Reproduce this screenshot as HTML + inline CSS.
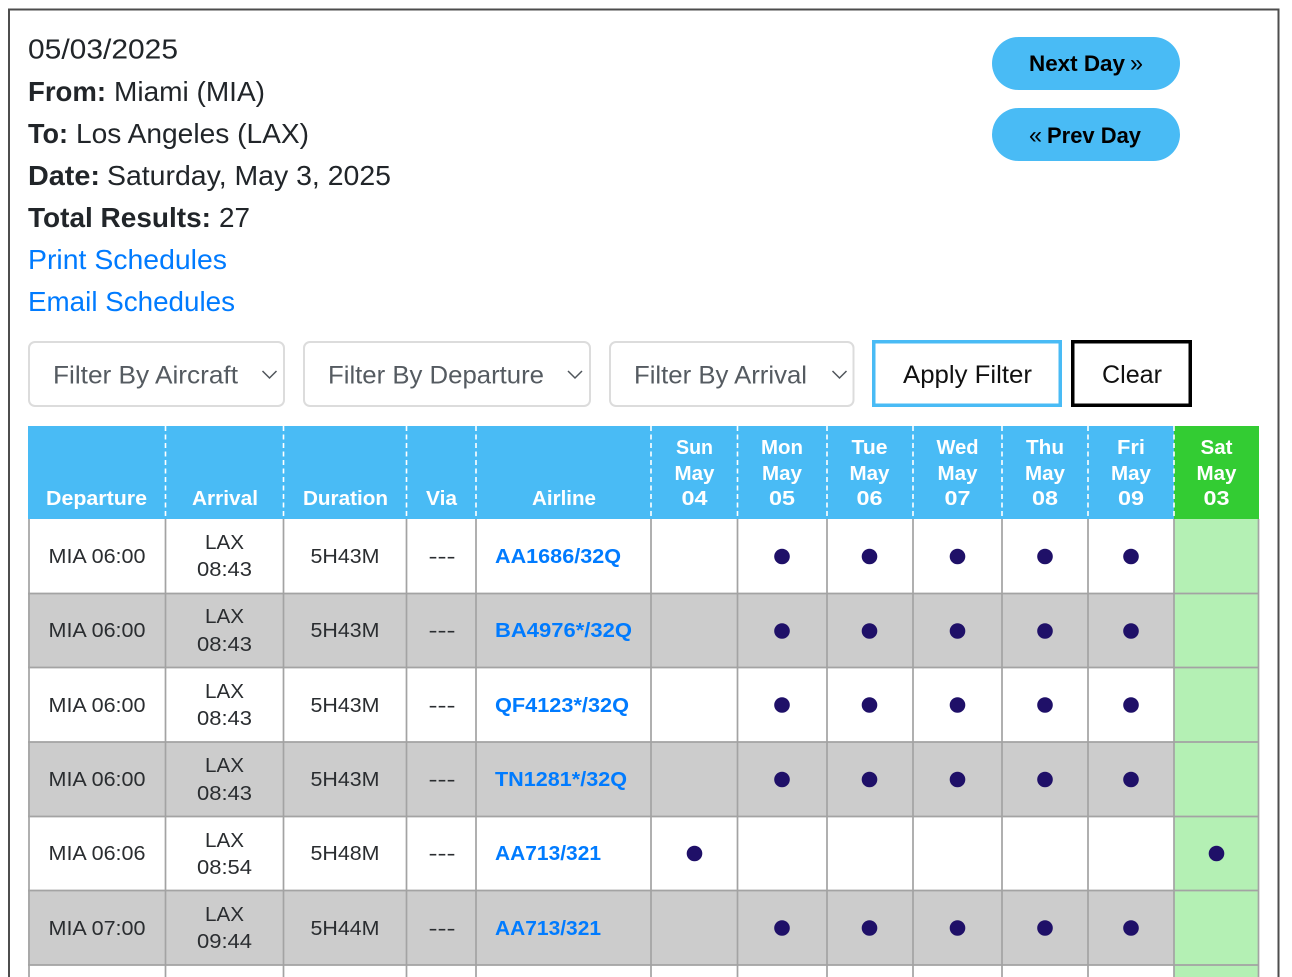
<!DOCTYPE html>
<html lang="en"><head><meta charset="utf-8"><title>Flight Schedules</title>
<style>
html,body{margin:0;padding:0;background:#fff;width:1292px;height:977px;overflow:hidden}
svg{display:block;font-family:"Liberation Sans",sans-serif;filter:blur(.3px)}
.b{font-weight:700}
.info{font-size:28px;fill:#212529}
.lnk{font-size:28px;fill:#007bff}
.sel{font-size:25px;fill:#555b61}
.hd{font-size:20.500px;font-weight:700;fill:#fff;text-anchor:middle}
.td{font-size:20px;fill:#2a2d30;text-anchor:middle}
.al{font-size:20px;font-weight:700;fill:#007bff}
</style></head><body>
<svg width="1292" height="977" viewBox="0 0 1292 977" xmlns="http://www.w3.org/2000/svg">
<rect width="1292" height="977" fill="#fff"/>
<path d="M9 977V9.500H1278.500V977" fill="none" stroke="#4d4d4d" stroke-width="2"/>

<text class="info" x="28" y="58.500" textLength="150" lengthAdjust="spacingAndGlyphs">05/03/2025</text>
<text class="info b" x="28" y="101" textLength="78" lengthAdjust="spacingAndGlyphs">From:</text><text class="info" x="114" y="101" textLength="151" lengthAdjust="spacingAndGlyphs">Miami (MIA)</text>
<text class="info b" x="28" y="143" textLength="40" lengthAdjust="spacingAndGlyphs">To:</text><text class="info" x="76" y="143" textLength="233" lengthAdjust="spacingAndGlyphs">Los Angeles (LAX)</text>
<text class="info b" x="28" y="185" textLength="72" lengthAdjust="spacingAndGlyphs">Date:</text><text class="info" x="107" y="185" textLength="284" lengthAdjust="spacingAndGlyphs">Saturday, May 3, 2025</text>
<text class="info b" x="28" y="227" textLength="183" lengthAdjust="spacingAndGlyphs">Total Results:</text><text class="info" x="219" y="227" textLength="31" lengthAdjust="spacingAndGlyphs">27</text>
<text class="lnk" x="28" y="269" textLength="199" lengthAdjust="spacingAndGlyphs">Print Schedules</text>
<text class="lnk" x="28" y="311" textLength="207" lengthAdjust="spacingAndGlyphs">Email Schedules</text>

<rect x="992" y="37" width="188" height="53" rx="26.500" fill="#49bbf5"/>
<rect x="992" y="108" width="188" height="53" rx="26.500" fill="#49bbf5"/>
<text class="b" x="1029" y="71" font-size="22.500" textLength="96" lengthAdjust="spacingAndGlyphs" fill="#000">Next Day</text>
<text x="1130" y="71" font-size="24" textLength="13" lengthAdjust="spacingAndGlyphs" fill="#000">»</text>
<text x="1029" y="143" font-size="24" textLength="13" lengthAdjust="spacingAndGlyphs" fill="#000">«</text>
<text class="b" x="1047" y="143" font-size="22.500" textLength="94" lengthAdjust="spacingAndGlyphs" fill="#000">Prev Day</text>

<g fill="#fff" stroke="#dcdcdc" stroke-width="2">
<rect x="29" y="342" width="255" height="64" rx="6"/>
<rect x="304" y="342" width="286" height="64" rx="6"/>
<rect x="610" y="342" width="243.500" height="64" rx="6"/>
</g>
<text class="sel" x="53" y="383.500" textLength="185" lengthAdjust="spacingAndGlyphs">Filter By Aircraft</text>
<text class="sel" x="328" y="383.500" textLength="216" lengthAdjust="spacingAndGlyphs">Filter By Departure</text>
<text class="sel" x="634" y="383.500" textLength="173" lengthAdjust="spacingAndGlyphs">Filter By Arrival</text>
<g fill="none" stroke="#4f555b" stroke-width="1.500">
<path d="M262.500 371l7 7l7-7"/>
<path d="M568 371l7 7l7-7"/>
<path d="M832.500 371l7 7l7-7"/>
</g>
<rect x="873.750" y="341.750" width="186.500" height="63.500" fill="#fff" stroke="#49bbf5" stroke-width="3.500"/>
<rect x="1072.750" y="341.750" width="117.500" height="63.500" fill="#fff" stroke="#000" stroke-width="3.500"/>
<text x="903" y="383" font-size="25" textLength="129" lengthAdjust="spacingAndGlyphs" fill="#111">Apply Filter</text>
<text x="1102" y="383" font-size="25" textLength="60" lengthAdjust="spacingAndGlyphs" fill="#111">Clear</text>

<!-- table backgrounds -->
<rect x="28" y="426" width="1146" height="93" fill="#49bbf5"/>
<rect x="1174" y="426" width="85" height="93" fill="#33cc33"/>
<rect x="28" y="519" width="1146" height="458" fill="#fff"/>
<rect x="28" y="593.500" width="1146" height="74" fill="#cccccc"/>
<rect x="28" y="742" width="1146" height="74.500" fill="#cccccc"/>
<rect x="28" y="890.500" width="1146" height="74.500" fill="#cccccc"/>
<rect x="1174" y="519" width="85" height="458" fill="#b4f0b4"/>

<!-- header dashed separators -->
<g stroke="#fff" stroke-width="1.600" stroke-dasharray="5 3.500">
<path d="M165.500 426V519M283.500 426V519M406.500 426V519M476 426V519M651 426V519M737.500 426V519M827 426V519M913 426V519M1002 426V519M1088 426V519M1174 426V519"/>
</g>
<!-- grid -->
<g stroke="#a3a3a3" stroke-width="1.700" fill="none">
<path d="M29 519V977M165.500 519V977M283.500 519V977M406.500 519V977M476 519V977M651 519V977M737.500 519V977M827 519V977M913 519V977M1002 519V977M1088 519V977M1174 519V977M1258.500 519V977"/>
<path d="M28 593.500H1259M28 667.500H1259M28 742H1259M28 816.500H1259M28 890.500H1259M28 965H1259"/>
</g>

<!-- header text -->
<text class="hd" x="96.500" y="505" textLength="101" lengthAdjust="spacingAndGlyphs">Departure</text>
<text class="hd" x="225" y="505" textLength="66" lengthAdjust="spacingAndGlyphs">Arrival</text>
<text class="hd" x="345.500" y="505" textLength="85" lengthAdjust="spacingAndGlyphs">Duration</text>
<text class="hd" x="441.500" y="505" textLength="31" lengthAdjust="spacingAndGlyphs">Via</text>
<text class="hd" x="564" y="505" textLength="64" lengthAdjust="spacingAndGlyphs">Airline</text>

<text class="hd" x="694.500" y="454" textLength="37" lengthAdjust="spacingAndGlyphs">Sun</text><text class="hd" x="694.500" y="480" textLength="40" lengthAdjust="spacingAndGlyphs">May</text><text class="hd" x="694.500" y="505" textLength="26" lengthAdjust="spacingAndGlyphs">04</text>
<text class="hd" x="782" y="454" textLength="42" lengthAdjust="spacingAndGlyphs">Mon</text><text class="hd" x="782" y="480" textLength="40" lengthAdjust="spacingAndGlyphs">May</text><text class="hd" x="782" y="505" textLength="26" lengthAdjust="spacingAndGlyphs">05</text>
<text class="hd" x="869.500" y="454" textLength="36" lengthAdjust="spacingAndGlyphs">Tue</text><text class="hd" x="869.500" y="480" textLength="40" lengthAdjust="spacingAndGlyphs">May</text><text class="hd" x="869.500" y="505" textLength="26" lengthAdjust="spacingAndGlyphs">06</text>
<text class="hd" x="957.500" y="454" textLength="42" lengthAdjust="spacingAndGlyphs">Wed</text><text class="hd" x="957.500" y="480" textLength="40" lengthAdjust="spacingAndGlyphs">May</text><text class="hd" x="957.500" y="505" textLength="26" lengthAdjust="spacingAndGlyphs">07</text>
<text class="hd" x="1045" y="454" textLength="38" lengthAdjust="spacingAndGlyphs">Thu</text><text class="hd" x="1045" y="480" textLength="40" lengthAdjust="spacingAndGlyphs">May</text><text class="hd" x="1045" y="505" textLength="26" lengthAdjust="spacingAndGlyphs">08</text>
<text class="hd" x="1131" y="454" textLength="28" lengthAdjust="spacingAndGlyphs">Fri</text><text class="hd" x="1131" y="480" textLength="40" lengthAdjust="spacingAndGlyphs">May</text><text class="hd" x="1131" y="505" textLength="26" lengthAdjust="spacingAndGlyphs">09</text>
<text class="hd" x="1216.500" y="454" textLength="32" lengthAdjust="spacingAndGlyphs">Sat</text><text class="hd" x="1216.500" y="480" textLength="40" lengthAdjust="spacingAndGlyphs">May</text><text class="hd" x="1216.500" y="505" textLength="26" lengthAdjust="spacingAndGlyphs">03</text>

<!-- row 1 -->
<text class="td" x="97" y="563" textLength="97" lengthAdjust="spacingAndGlyphs">MIA 06:00</text><text class="td" x="224.500" y="549" textLength="39" lengthAdjust="spacingAndGlyphs">LAX</text><text class="td" x="224.500" y="576" textLength="55" lengthAdjust="spacingAndGlyphs">08:43</text><text class="td" x="345" y="563" textLength="69" lengthAdjust="spacingAndGlyphs">5H43M</text><text class="td" x="442" y="563" textLength="27" lengthAdjust="spacingAndGlyphs">---</text><text class="al" x="495" y="563" textLength="126" lengthAdjust="spacingAndGlyphs">AA1686/32Q</text>
<!-- row 2 -->
<text class="td" x="97" y="637" textLength="97" lengthAdjust="spacingAndGlyphs">MIA 06:00</text><text class="td" x="224.500" y="623" textLength="39" lengthAdjust="spacingAndGlyphs">LAX</text><text class="td" x="224.500" y="651" textLength="55" lengthAdjust="spacingAndGlyphs">08:43</text><text class="td" x="345" y="637" textLength="69" lengthAdjust="spacingAndGlyphs">5H43M</text><text class="td" x="442" y="637" textLength="27" lengthAdjust="spacingAndGlyphs">---</text><text class="al" x="495" y="637" textLength="137" lengthAdjust="spacingAndGlyphs">BA4976*/32Q</text>
<!-- row 3 -->
<text class="td" x="97" y="712" textLength="97" lengthAdjust="spacingAndGlyphs">MIA 06:00</text><text class="td" x="224.500" y="698" textLength="39" lengthAdjust="spacingAndGlyphs">LAX</text><text class="td" x="224.500" y="725" textLength="55" lengthAdjust="spacingAndGlyphs">08:43</text><text class="td" x="345" y="712" textLength="69" lengthAdjust="spacingAndGlyphs">5H43M</text><text class="td" x="442" y="712" textLength="27" lengthAdjust="spacingAndGlyphs">---</text><text class="al" x="495" y="712" textLength="134" lengthAdjust="spacingAndGlyphs">QF4123*/32Q</text>
<!-- row 4 -->
<text class="td" x="97" y="786" textLength="97" lengthAdjust="spacingAndGlyphs">MIA 06:00</text><text class="td" x="224.500" y="772" textLength="39" lengthAdjust="spacingAndGlyphs">LAX</text><text class="td" x="224.500" y="800" textLength="55" lengthAdjust="spacingAndGlyphs">08:43</text><text class="td" x="345" y="786" textLength="69" lengthAdjust="spacingAndGlyphs">5H43M</text><text class="td" x="442" y="786" textLength="27" lengthAdjust="spacingAndGlyphs">---</text><text class="al" x="495" y="786" textLength="132" lengthAdjust="spacingAndGlyphs">TN1281*/32Q</text>
<!-- row 5 -->
<text class="td" x="97" y="860" textLength="97" lengthAdjust="spacingAndGlyphs">MIA 06:06</text><text class="td" x="224.500" y="847" textLength="39" lengthAdjust="spacingAndGlyphs">LAX</text><text class="td" x="224.500" y="874" textLength="55" lengthAdjust="spacingAndGlyphs">08:54</text><text class="td" x="345" y="860" textLength="69" lengthAdjust="spacingAndGlyphs">5H48M</text><text class="td" x="442" y="860" textLength="27" lengthAdjust="spacingAndGlyphs">---</text><text class="al" x="495" y="860" textLength="106" lengthAdjust="spacingAndGlyphs">AA713/321</text>
<!-- row 6 -->
<text class="td" x="97" y="935" textLength="97" lengthAdjust="spacingAndGlyphs">MIA 07:00</text><text class="td" x="224.500" y="921" textLength="39" lengthAdjust="spacingAndGlyphs">LAX</text><text class="td" x="224.500" y="948" textLength="55" lengthAdjust="spacingAndGlyphs">09:44</text><text class="td" x="345" y="935" textLength="69" lengthAdjust="spacingAndGlyphs">5H44M</text><text class="td" x="442" y="935" textLength="27" lengthAdjust="spacingAndGlyphs">---</text><text class="al" x="495" y="935" textLength="106" lengthAdjust="spacingAndGlyphs">AA713/321</text>

<!-- dots -->
<g fill="#1f1068">
<circle cx="782" cy="556.500" r="7.800"/><circle cx="869.500" cy="556.500" r="7.800"/><circle cx="957.500" cy="556.500" r="7.800"/><circle cx="1045" cy="556.500" r="7.800"/><circle cx="1131" cy="556.500" r="7.800"/>
<circle cx="782" cy="631" r="7.800"/><circle cx="869.500" cy="631" r="7.800"/><circle cx="957.500" cy="631" r="7.800"/><circle cx="1045" cy="631" r="7.800"/><circle cx="1131" cy="631" r="7.800"/>
<circle cx="782" cy="705" r="7.800"/><circle cx="869.500" cy="705" r="7.800"/><circle cx="957.500" cy="705" r="7.800"/><circle cx="1045" cy="705" r="7.800"/><circle cx="1131" cy="705" r="7.800"/>
<circle cx="782" cy="779.500" r="7.800"/><circle cx="869.500" cy="779.500" r="7.800"/><circle cx="957.500" cy="779.500" r="7.800"/><circle cx="1045" cy="779.500" r="7.800"/><circle cx="1131" cy="779.500" r="7.800"/>
<circle cx="694.500" cy="853.500" r="7.800"/><circle cx="1216.500" cy="853.500" r="7.800"/>
<circle cx="782" cy="928" r="7.800"/><circle cx="869.500" cy="928" r="7.800"/><circle cx="957.500" cy="928" r="7.800"/><circle cx="1045" cy="928" r="7.800"/><circle cx="1131" cy="928" r="7.800"/>
</g>
</svg>
</body></html>
